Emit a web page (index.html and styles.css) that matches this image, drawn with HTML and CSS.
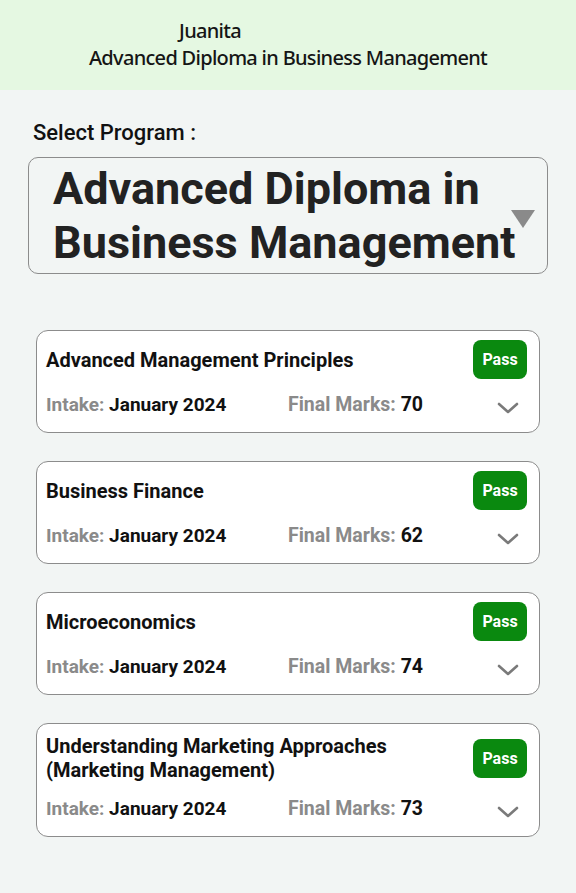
FILE: index.html
```html
<!DOCTYPE html>
<html lang="en">
<head>
    <meta charset="UTF-8">
    <meta name="viewport" content="width=device-width, initial-scale=1.0">
    <title>Results</title>
    <link rel="stylesheet" href="styles.css">
</head>
<body>
    <div class="header">
        <div class="student-name">Juanita</div>
        <div class="student-program">Advanced Diploma in Business Management</div>
    </div>
    <div class="content">
        <div class="select-label">Select Program :</div>
        <div class="program-select">
            <span class="program-select-text">Advanced Diploma in Business Management</span>
            <span class="program-select-arrow"></span>
        </div>

        <div class="course-list">
            <div class="course-card">
                <div class="course-top">
                    <div class="course-title">Advanced Management Principles</div>
                    <div class="badge-pass">Pass</div>
                </div>
                <div class="course-info">
                    <div class="info-intake"><span class="info-label">Intake:</span> January 2024</div>
                    <div class="info-marks"><span class="info-label">Final Marks:</span> 70</div>
                    <svg class="chevron" width="22" height="12" viewBox="0 0 22 12"><path d="M2 2 L11 10 L20 2" fill="none" stroke="#7a7a7a" stroke-width="2.6" stroke-linecap="round" stroke-linejoin="round"/></svg>
                </div>
            </div>
            <div class="course-card">
                <div class="course-top">
                    <div class="course-title">Business Finance</div>
                    <div class="badge-pass">Pass</div>
                </div>
                <div class="course-info">
                    <div class="info-intake"><span class="info-label">Intake:</span> January 2024</div>
                    <div class="info-marks"><span class="info-label">Final Marks:</span> 62</div>
                    <svg class="chevron" width="22" height="12" viewBox="0 0 22 12"><path d="M2 2 L11 10 L20 2" fill="none" stroke="#7a7a7a" stroke-width="2.6" stroke-linecap="round" stroke-linejoin="round"/></svg>
                </div>
            </div>
            <div class="course-card">
                <div class="course-top">
                    <div class="course-title">Microeconomics</div>
                    <div class="badge-pass">Pass</div>
                </div>
                <div class="course-info">
                    <div class="info-intake"><span class="info-label">Intake:</span> January 2024</div>
                    <div class="info-marks"><span class="info-label">Final Marks:</span> 74</div>
                    <svg class="chevron" width="22" height="12" viewBox="0 0 22 12"><path d="M2 2 L11 10 L20 2" fill="none" stroke="#7a7a7a" stroke-width="2.6" stroke-linecap="round" stroke-linejoin="round"/></svg>
                </div>
            </div>
            <div class="course-card">
                <div class="course-top">
                    <div class="course-title">Understanding Marketing Approaches (Marketing Management)</div>
                    <div class="badge-pass">Pass</div>
                </div>
                <div class="course-info">
                    <div class="info-intake"><span class="info-label">Intake:</span> January 2024</div>
                    <div class="info-marks"><span class="info-label">Final Marks:</span> 73</div>
                    <svg class="chevron" width="22" height="12" viewBox="0 0 22 12"><path d="M2 2 L11 10 L20 2" fill="none" stroke="#7a7a7a" stroke-width="2.6" stroke-linecap="round" stroke-linejoin="round"/></svg>
                </div>
            </div>
        </div>
    </div>
</body>
</html>
```

FILE: styles.css
```css
body{
    margin: 0px;
    background: #f2f5f4;
    font-family: Roboto, "Liberation Sans", sans-serif;
    color: #111111;
}
.header{
    height: 90px;
    background: #e5f8e2;
    display: flex;
    flex-direction: column;
    align-items: center;
    padding-top: 17px;
    box-sizing: border-box;
    font-family: "Noto Sans", sans-serif;
    font-size: 20px;
    font-weight: 500;
    line-height: 27px;
    color: #151515;
    letter-spacing: -0.7px;
}
.student-name{
    margin-right: 156px;
}
.content{
    padding: 30px 28px 40px 28px;
}
.select-label{
    margin-left: 5px;
    font-size: 22px;
    font-weight: 500;
    line-height: 26px;
}
.program-select{
    margin-top: 11px;
    height: 117px;
    box-sizing: border-box;
    border: 1.5px solid #8c8c8c;
    border-radius: 10px;
    display: flex;
    align-items: center;
    padding: 1px 12px 0px 24px;
}
.program-select-text{
    flex: 1;
    font-size: 45px;
    font-weight: 700;
    line-height: 54px;
    color: #222222;
}
.program-select-arrow{
    width: 0px;
    height: 0px;
    border-left: 12px solid transparent;
    border-right: 12px solid transparent;
    border-top: 18px solid #8a8a8a;
    margin-top: 6px;
    margin-left: -14px;
}
.course-list{
    margin: 56px 8px 0px 8px;
    display: flex;
    flex-direction: column;
    gap: 28px;
}
.course-card{
    background: #ffffff;
    border: 1px solid #8c8c8c;
    border-radius: 12px;
    padding: 9px 12px 15px 9px;
}
.course-top{
    display: flex;
    align-items: center;
    justify-content: space-between;
    gap: 12px;
}
.course-title{
    font-size: 20px;
    font-weight: 700;
    line-height: 24px;
    padding: 1px 0px;
    max-width: 380px;
}
.badge-pass{
    width: 54px;
    height: 39px;
    line-height: 39px;
    text-align: center;
    background: #0a890f;
    color: #ffffff;
    border-radius: 8px;
    font-size: 16px;
    font-weight: 700;
    flex-shrink: 0;
}
.course-info{
    margin-top: 14px;
    display: flex;
    align-items: center;
    font-size: 19px;
    font-weight: 700;
    line-height: 24px;
}
.info-intake{
    width: 242px;
}
.info-marks{
    flex: 1;
    font-size: 19.5px;
}
.info-label{
    color: #8a8a8a;
}
.chevron{
    margin-right: 8px;
    margin-top: 6px;
}
```
